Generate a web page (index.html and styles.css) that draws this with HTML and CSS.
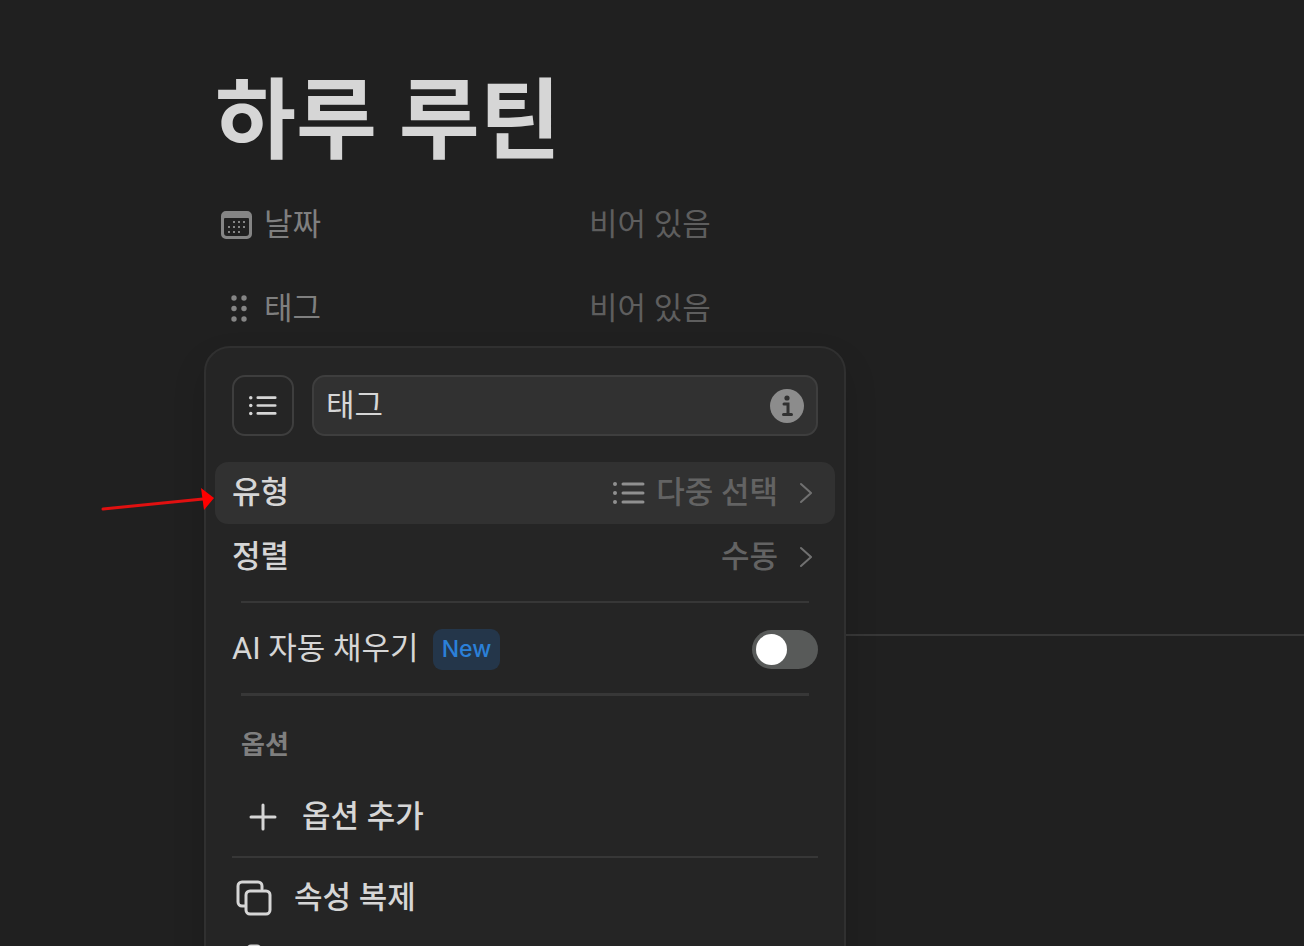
FILE: index.html
```html
<!DOCTYPE html>
<html lang="ko">
  <head>
    <meta charset="UTF-8" />
    <meta name="viewport" content="width=device-width, initial-scale=1.0" />
    <title>하루 루틴</title>
    <link rel="stylesheet" href="styles.css">
  </head>
  <body>
    <main class="page">
      <h1 class="title">하루 루틴</h1>

      <div class="property">
        <button class="property-name">
          <svg viewBox="0 0 32 32" width="32" height="32">
            <path fill-rule="evenodd" d="M6 2h21a5 5 0 0 1 5 5v18a5 5 0 0 1-5 5H6a5 5 0 0 1-5-5V7a5 5 0 0 1 5-5zM4 10v14a3 3 0 0 0 3 3h19a3 3 0 0 0 3-3V10a1 1 0 0 0-1-1H5a1 1 0 0 0-1 1z" />
            <path d="M13 12h2v2h-2zM18 12h2v2h-2zM23 12h2v2h-2zM8 17h2v2H8zM13 17h2v2h-2zM18 17h2v2h-2zM23 17h2v2h-2zM8 22h2v2H8zM13 22h2v2h-2zM18 22h2v2h-2z" />
          </svg>
          날짜
        </button>
        <button class="property-value">비어 있음</button>
      </div>

      <div class="property">
        <button class="property-name">
          <svg viewBox="0 0 32 32" width="32" height="32">
            <circle cx="14" cy="5" r="2.7" /><circle cx="24" cy="5" r="2.7" />
            <circle cx="14" cy="15.500" r="2.7" /><circle cx="24" cy="15.500" r="2.7" />
            <circle cx="14" cy="26" r="2.7" /><circle cx="24" cy="26" r="2.7" />
          </svg>
          태그
        </button>
        <button class="property-value">비어 있음</button>

        <!-- 속성 편집 메뉴 -->
        <div class="menu">
          <div class="menu-header">
            <button class="icon-button" aria-label="아이콘 변경">
              <svg class="list-icon" viewBox="0 0 32 24" width="28" height="21">
                <path d="M10 3h20M10 12h20M10 21h20" />
                <circle cx="2" cy="3" r="2" /><circle cx="2" cy="12" r="2" /><circle cx="2" cy="21" r="2" />
              </svg>
            </button>
            <div class="name-field">
              <input type="text" value="태그" aria-label="속성 이름" />
              <svg class="info-icon" viewBox="0 0 34 34" width="34" height="34">
                <circle class="info-disc" cx="17" cy="17" r="17" />
                <circle cx="17" cy="9" r="2.6" />
                <path d="M14 15h4v10M13.500 25.500h8" />
              </svg>
            </div>
          </div>

          <button class="menu-row active">
            <span>유형</span>
            <span class="row-value">
              <svg class="list-icon" viewBox="0 0 32 24" width="32" height="24">
                <path d="M10 3h20M10 12h20M10 21h20" />
                <circle cx="2" cy="3" r="2" /><circle cx="2" cy="12" r="2" /><circle cx="2" cy="21" r="2" />
              </svg>
              다중 선택
              <svg class="chevron" viewBox="0 0 12 22" width="12" height="22"><path d="M1 2l10 9-10 9" /></svg>
            </span>
            <svg class="pointer" viewBox="0 0 114 24" width="114" height="24">
              <path class="pointer-line" d="M2 21L102 11" />
              <path class="pointer-head" d="M100 0l13 10-10 12z" />
            </svg>
          </button>
          <button class="menu-row">
            <span>정렬</span>
            <span class="row-value">
              수동
              <svg class="chevron" viewBox="0 0 12 22" width="12" height="22"><path d="M1 2l10 9-10 9" /></svg>
            </span>
          </button>

          <hr class="inset" />

          <div class="menu-row autofill">
            <label for="autofill">AI 자동 채우기 <span class="badge">New</span></label>
            <input class="switch" type="checkbox" role="switch" id="autofill" />
          </div>

          <hr class="inset thick" />

          <h2 class="section-title">옵션</h2>
          <button class="menu-row option-add">
            <svg class="stroke-icon" viewBox="0 0 28 28" width="28" height="28"><path d="M14 2v24M2 14h24" /></svg>
            옵션 추가
          </button>

          <hr />

          <button class="menu-row action">
            <svg class="stroke-icon" viewBox="0 0 36 36" width="36" height="36">
              <path d="M9 26H6a4 4 0 0 1-4-4V6a4 4 0 0 1 4-4h16a4 4 0 0 1 4 4v3" />
              <rect x="10" y="11" width="24" height="23" rx="4" />
            </svg>
            속성 복제
          </button>
          <button class="menu-row action" aria-label="속성 삭제">
            <svg class="stroke-icon" viewBox="0 0 36 36" width="36" height="36">
              <path d="M12 7V5a3 3 0 0 1 3-3h6a3 3 0 0 1 3 3v2M4 8h28M7 8l2 23a3 3 0 0 0 3 3h12a3 3 0 0 0 3-3l2-23" />
            </svg>
          </button>
        </div>
      </div>

      <hr class="page-divider" />
    </main>
  </body>
</html>
```
FILE: styles.css
```css
* {
  box-sizing: border-box;
}
body {
  margin: 0;
  height: 100vh;
  overflow: hidden;
  background-color: #202020;
  color: #d6d6d6;
  font-family: Roboto, "Noto Sans CJK KR", sans-serif;
  font-size: 31px;
  line-height: 46px;
}
button,
input {
  font: inherit;
  color: inherit;
  background: none;
  border: none;
  margin: 0;
  padding: 0;
}
button {
  cursor: pointer;
  text-align: left;
}
svg {
  flex: none;
}
hr {
  margin: 0;
  border: none;
  height: 2px;
  background-color: #373737;
}
.page {
  padding: 57px 0 0 213px;
}
.title {
  margin: 0;
  padding: 0 2px;
  font-size: 88px;
  font-weight: 700;
  line-height: 128px;
}
.property {
  position: relative;
  display: flex;
  align-items: center;
  height: 62px;
  margin-bottom: 22px;
}
.title + .property {
  margin-top: 9px;
}
.property-name {
  display: flex;
  align-items: center;
  gap: 12px;
  width: 376px;
  padding-left: 7px;
  color: #7f7f7f;
  fill: #858585;
}
.property-value {
  color: #5e5e5e;
}
.page-divider {
  margin-top: 294px;
}

/* 메뉴 */
.menu {
  position: absolute;
  z-index: 1;
  top: 68px;
  left: -9px;
  width: 642px;
  padding: 27px 9px;
  background-color: #252525;
  border: 2px solid #303030;
  border-radius: 26px;
  box-shadow: 0 16px 32px rgba(0, 0, 0, 0.15);
}
.menu-header {
  display: flex;
  gap: 18px;
  margin: 0 17px 26px;
}
.icon-button {
  flex: none;
  display: flex;
  align-items: center;
  justify-content: center;
  width: 62px;
  height: 61px;
  border: 2px solid #3e3e3e;
  border-radius: 13px;
}
.name-field {
  flex: 1;
  min-width: 0;
  display: flex;
  align-items: center;
  height: 61px;
  padding: 0 12px;
  background-color: #313131;
  border: 2px solid #3e3e3e;
  border-radius: 13px;
}
.name-field input {
  flex: 1;
  min-width: 0;
  outline: none;
}
.info-icon {
  fill: #313131;
  stroke: #313131;
  stroke-width: 3;
  stroke-linecap: round;
}
.info-icon path {
  fill: none;
}
.info-icon circle {
  stroke: none;
}
.info-icon .info-disc {
  fill: #8c8c8c;
}
.list-icon {
  fill: currentColor;
  stroke: currentColor;
  stroke-width: 3;
  stroke-linecap: round;
}
.list-icon circle {
  stroke: none;
}
.menu-row {
  position: relative;
  display: flex;
  align-items: center;
  justify-content: space-between;
  width: 100%;
  height: 62px;
  margin-bottom: 2px;
  padding: 0 17px;
  border-radius: 13px;
  font-weight: 500;
}
.menu-row.active {
  background-color: #313131;
}
.row-value {
  display: flex;
  align-items: center;
  gap: 11px;
  color: #636363;
}
.row-value .list-icon {
  color: #909090;
}
.chevron {
  margin: 0 6px 0 11px;
  fill: none;
  stroke: #707070;
  stroke-width: 2;
  stroke-linecap: round;
}
.pointer {
  position: absolute;
  top: 26px;
  right: 100%;
}
.pointer-line {
  stroke: #e01010;
  stroke-width: 3;
  stroke-linecap: round;
}
.pointer-head {
  fill: #ff0000;
}
.menu hr {
  margin: 0 17px;
}
.menu hr.inset {
  margin: 13px 26px 15px;
}
.menu hr.thick {
  height: 3px;
  margin: 13px 26px 26px;
}
.menu-row.autofill {
  font-weight: 400;
}
.autofill label {
  display: flex;
  align-items: center;
  gap: 14px;
}
.badge {
  padding: 0 9px;
  border-radius: 9px;
  background-color: #24364a;
  color: #2b80d8;
  font-family: Inter, sans-serif;
  font-size: 23px;
  font-weight: 500;
  line-height: 41px;
}
.switch {
  appearance: none;
  width: 66px;
  height: 39px;
  padding: 4px;
  border-radius: 20px;
  background-color: #585a59;
  cursor: pointer;
}
.switch::before {
  content: "";
  display: block;
  width: 31px;
  height: 31px;
  border-radius: 50%;
  background-color: #fff;
}
.switch:checked {
  background-color: #2b80d8;
}
.switch:checked::before {
  margin-left: auto;
}
.section-title {
  margin: 0 26px 18px;
  color: #7f7f7f;
  font-size: 26px;
  font-weight: 600;
  line-height: 46px;
}
.stroke-icon {
  fill: none;
  stroke: currentColor;
  stroke-width: 3;
  stroke-linecap: round;
  stroke-linejoin: round;
}
.option-add {
  justify-content: flex-start;
  gap: 25px;
  padding-left: 34px;
  margin-bottom: 8px;
}
.action {
  justify-content: flex-start;
  gap: 22px;
  padding-left: 21px;
}
.menu hr + .action {
  margin-top: 9px;
}
```
